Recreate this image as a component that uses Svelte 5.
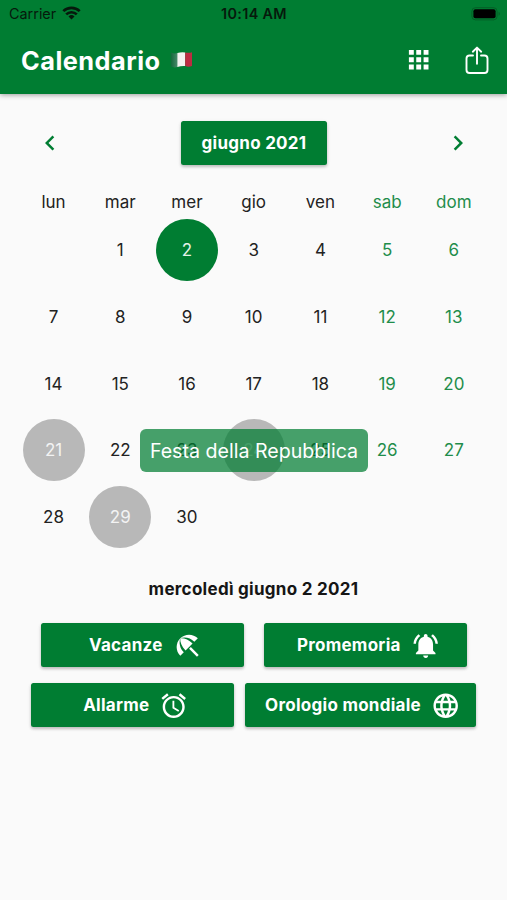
<script>
  const weekdays = ['lun', 'mar', 'mer', 'gio', 'ven', 'sab', 'dom'];
  const days = [null, ...Array.from({ length: 30 }, (_, i) => i + 1)];
  const selected = 2;
  const marked = [21, 24, 29];

  const icons = {
    beach: 'M13.127 14.56l1.43-1.43 6.44 6.443L19.57 21zm4.293-5.73l2.86-2.86c-3.95-3.95-10.35-3.96-14.3-.02 3.93-1.3 8.31-.25 11.44 2.88zM5.95 5.98c-3.94 3.95-3.93 10.35.02 14.3l2.86-2.86C5.7 14.29 4.65 9.91 5.95 5.98zm.02-.02l-.01.01c-.38 3.01 1.17 6.88 4.3 10.02l5.73-5.73c-3.13-3.13-7.01-4.68-10.02-4.3z',
    bell: 'M7.58 4.08L6.15 2.65C3.75 4.48 2.17 7.3 2.03 10.5h2c.15-2.65 1.51-4.97 3.55-6.42zm12.39 6.42h2c-.15-3.2-1.73-6.02-4.12-7.85l-1.42 1.43c2.02 1.45 3.39 3.77 3.54 6.42zM18 11c0-3.07-1.64-5.64-4.5-6.32V4c0-.83-.67-1.5-1.5-1.5s-1.5.67-1.5 1.5v.68C7.63 5.36 6 7.92 6 11v5l-2 2v1h16v-1l-2-2v-5zm-6 11c.14 0 .27-.01.4-.04.65-.14 1.18-.58 1.44-1.18.1-.24.15-.5.15-.78h-4c.01 1.1.9 2 2.01 2z',
    alarm: 'M22 5.72l-4.6-3.86-1.29 1.53 4.6 3.86L22 5.72zM7.88 3.39L6.6 1.86 2 5.71l1.29 1.53 4.59-3.85zM12.5 8H11v6l4.75 2.85.75-1.23-4-2.37V8zM12 4c-4.97 0-9 4.03-9 9s4.02 9 9 9c4.97 0 9-4.03 9-9s-4.03-9-9-9zm0 16c-3.87 0-7-3.13-7-7s3.13-7 7-7 7 3.13 7 7-3.13 7-7 7z',
    globe: 'M11.99 2C6.47 2 2 6.48 2 12s4.47 10 9.99 10C17.52 22 22 17.52 22 12S17.52 2 11.99 2zm6.93 6h-2.95c-.32-1.25-.78-2.45-1.38-3.56 1.84.63 3.37 1.91 4.33 3.56zM12 4.04c.83 1.2 1.48 2.53 1.91 3.96h-3.82c.43-1.43 1.08-2.76 1.91-3.96zM4.26 14C4.1 13.36 4 12.69 4 12s.1-1.36.26-2h3.38c-.08.66-.14 1.32-.14 2s.06 1.34.14 2H4.26zm.82 2h2.95c.32 1.25.78 2.45 1.38 3.56-1.84-.63-3.37-1.9-4.33-3.56zm2.95-8H5.08c.96-1.66 2.49-2.93 4.33-3.56C8.81 5.55 8.35 6.75 8.03 8zM12 19.96c-.83-1.2-1.48-2.53-1.91-3.96h3.82c-.43 1.43-1.08 2.76-1.91 3.96zM14.34 14H9.66c-.09-.66-.16-1.32-.16-2s.07-1.35.16-2h4.68c.09.65.16 1.32.16 2s-.07 1.34-.16 2zm.25 5.56c.6-1.11 1.06-2.31 1.38-3.56h2.95c-.96 1.65-2.49 2.93-4.33 3.56zM16.36 14c.08-.66.14-1.32.14-2s-.06-1.34-.14-2h3.38c.16.64.26 1.31.26 2s-.1 1.36-.26 2h-3.38z'
  };

  const rows = [
    [
      { label: 'Vacanze', icon: 'beach' },
      { label: 'Promemoria', icon: 'bell' }
    ],
    [
      { label: 'Allarme', icon: 'alarm' },
      { label: 'Orologio mondiale', icon: 'globe', wide: true }
    ]
  ];
</script>

<div class="screen">
  <header>
    <div class="status">
      <div class="carrier">
        <span>Carrier</span>
        <svg width="19" height="14" viewBox="0 0 19 14" fill="none" stroke="#06190c" stroke-width="2.7">
          <path d="M1.3 5.1a11.8 11.8 0 0 1 16.4 0" />
          <path d="M4.2 8.4a7.6 7.6 0 0 1 10.6 0" />
          <path d="M9.5 13.6L6.5 10.5a4.3 4.3 0 0 1 6 0z" fill="#06190c" stroke="none" />
        </svg>
      </div>
      <span class="time">10:14 AM</span>
      <svg class="battery" width="30" height="14" viewBox="0 0 30 14">
        <rect x=".9" y=".7" width="25.2" height="12.2" rx="3.6" fill="none" stroke="#045f27" stroke-width="1" />
        <rect x="2.4" y="2.3" width="22.2" height="9" rx="2" fill="#000" />
        <path d="M27.6 4.8v4c1.6-.6 1.6-3.4 0-4z" fill="#045f27" />
      </svg>
    </div>
    <div class="appbar">
      <h1>Calendario</h1>
      <svg class="flag" width="24" height="18" viewBox="0 0 24 18">
        <defs>
          <linearGradient id="stripe">
            <stop offset="0" stop-color="#12693a" />
            <stop offset="1" stop-color="#4a8a6c" />
          </linearGradient>
        </defs>
        <path d="M.8 1.6Q4 3 7.8 1.9V15.9Q4 17 .8 15.6z" fill="url(#stripe)" />
        <path d="M7.4 2.1Q11 .8 15.2 1.4V15.1Q11 14.8 7.4 16.1z" fill="#f4f2f0" />
        <path d="M15.2 1.4Q18.6 2.2 22 1.2V15Q18.6 16.2 15.2 15.1z" fill="#bd2c42" />
      </svg>
      <svg class="apps" width="29.4" height="29.4" viewBox="0 0 24 24" fill="#fff">
        <path d="M4 8h4V4H4zM10 8h4V4h-4zM16 8h4V4h-4zM4 14h4v-4H4zM10 14h4v-4h-4zM16 14h4v-4h-4zM4 20h4v-4H4zM10 20h4v-4h-4zM16 20h4v-4h-4z" />
      </svg>
      <svg class="share" width="24" height="29" viewBox="0 0 24 29" fill="none" stroke="#fff" stroke-width="1.9" stroke-linecap="round" stroke-linejoin="round">
        <path d="M8 9.5H4.6Q1.5 9.5 1.5 12.6V23.9Q1.5 27 4.6 27H19.4Q22.5 27 22.5 23.9V12.6Q22.5 9.5 19.4 9.5H16" />
        <path d="M12 17.7V1.8M7.8 5.7L12 1.6L16.2 5.7" />
      </svg>
    </div>
  </header>

  <nav>
    <svg width="30" height="30" viewBox="0 0 24 24" fill="#007d32"><path d="M15.41 7.41L14 6l-6 6 6 6 1.41-1.41L10.83 12z" /></svg>
    <button class="month">giugno 2021</button>
    <svg width="30" height="30" viewBox="0 0 24 24" fill="#007d32"><path d="M10 6L8.59 7.41 13.17 12l-4.58 4.59L10 18l6-6z" /></svg>
  </nav>

  <div class="week">
    {#each weekdays as name, i}
      <span class:weekend={i > 4}>{name}</span>
    {/each}
  </div>

  <div class="days">
    {#each days as day, i}
      <div class="cell">
        {#if day}
          <span class="day" class:weekend={i % 7 > 4} class:selected={day === selected} class:marked={marked.includes(day)}>{day}</span>
        {/if}
      </div>
    {/each}
    <div class="toast">Festa della Repubblica</div>
  </div>

  <p class="date">mercoledì giugno 2 2021</p>

  <div class="actions">
    {#each rows as row}
      <div class="row">
        {#each row as action}
          <button class:wide={action.wide}>
            <span>{action.label}</span>
            <svg width="29.4" height="29.4" viewBox="0 0 24 24" fill="#fff"><path d={icons[action.icon]} /></svg>
          </button>
        {/each}
      </div>
    {/each}
  </div>
</div>

<style>
  :global(body) {
    margin: 0;
    background: #fafafa;
  }
  .screen {
    width: 507px;
    height: 900px;
    overflow: hidden;
    background: #fafafa;
    color: #222;
    font-family: Inter, 'Liberation Sans', sans-serif;
    font-size: 17px;
  }
  svg {
    display: block;
    flex: none;
  }
  header {
    box-sizing: border-box;
    height: 94px;
    background: #007d32;
    box-shadow: 0 1px 5px rgba(0, 0, 0, 0.38);
  }
  .status {
    display: grid;
    grid-template-columns: 1fr auto 1fr;
    align-items: center;
    height: 27px;
    padding: 0 6px 0 9px;
    color: #06190c;
    font-size: 14.4px;
  }
  .carrier {
    display: flex;
    align-items: center;
    gap: 6px;
  }
  .carrier svg {
    margin-top: -2px;
  }
  .time {
    font-weight: 600;
    letter-spacing: 0.35px;
    margin-left: -2px;
  }
  .battery {
    justify-self: end;
  }
  .appbar {
    display: flex;
    align-items: center;
    height: 67px;
    padding: 0 18px 0 21px;
  }
  h1 {
    margin: 0;
    color: #fff;
    font-size: 25.3px;
    font-weight: 700;
    letter-spacing: 0.5px;
    line-height: 30px;
  }
  .flag {
    margin-left: 9px;
    margin-top: -1px;
  }
  .apps {
    margin-left: auto;
    margin-right: 32px;
    margin-top: -1px;
  }
  nav {
    display: flex;
    align-items: center;
    justify-content: space-between;
    height: 44px;
    margin-top: 27px;
    padding: 0 34px 0 35px;
  }
  button {
    display: flex;
    align-items: center;
    justify-content: center;
    box-sizing: border-box;
    height: 44px;
    padding: 0;
    border: 0;
    border-radius: 2.5px;
    background: #007d32;
    color: #fff;
    font: 700 17px Inter, 'Liberation Sans', sans-serif;
    letter-spacing: 0.27px;
    box-shadow: 0 2px 3px rgba(0, 0, 0, 0.2), 0 1px 4px rgba(0, 0, 0, 0.08);
  }
  .month {
    width: 146px;
  }
  .week,
  .days {
    display: grid;
    grid-template-columns: repeat(7, 1fr);
    padding: 0 19.8px 0 20.2px;
  }
  .week {
    margin-top: 27px;
    height: 25px;
    line-height: 21px;
    text-align: center;
  }
  .days {
    position: relative;
    grid-auto-rows: 66.7px;
  }
  .cell {
    display: flex;
    align-items: center;
    justify-content: center;
  }
  .day {
    width: 62px;
    height: 62px;
    border-radius: 50%;
    line-height: 62px;
    text-align: center;
  }
  .weekend {
    color: #1f8d4b;
  }
  .selected {
    background: #007d32;
    color: #e5f2e9;
  }
  .marked {
    background: #b8b8b8;
    color: #f3f3f3;
  }
  .toast {
    position: absolute;
    left: 140px;
    top: 212px;
    width: 228px;
    height: 43px;
    border-radius: 6px;
    background: rgba(0, 125, 50, 0.72);
    color: #fff;
    font-size: 19.6px;
    line-height: 44px;
    text-align: center;
    white-space: nowrap;
  }
  .date {
    margin: 27px 0 0;
    color: #151515;
    font-weight: 700;
    letter-spacing: 0.28px;
    line-height: 24px;
    text-align: center;
  }
  .actions {
    display: flex;
    flex-direction: column;
    gap: 16px;
    margin-top: 22px;
  }
  .row {
    display: flex;
    justify-content: center;
    gap: 20px;
  }
  .row:last-child {
    gap: 11px;
  }
  .row button {
    width: 203px;
    gap: 10px;
    padding-left: 7px;
  }
  .row:last-child button {
    width: 202.5px;
  }
  .row:last-child .wide {
    width: 231px;
    padding-left: 5px;
  }
</style>
